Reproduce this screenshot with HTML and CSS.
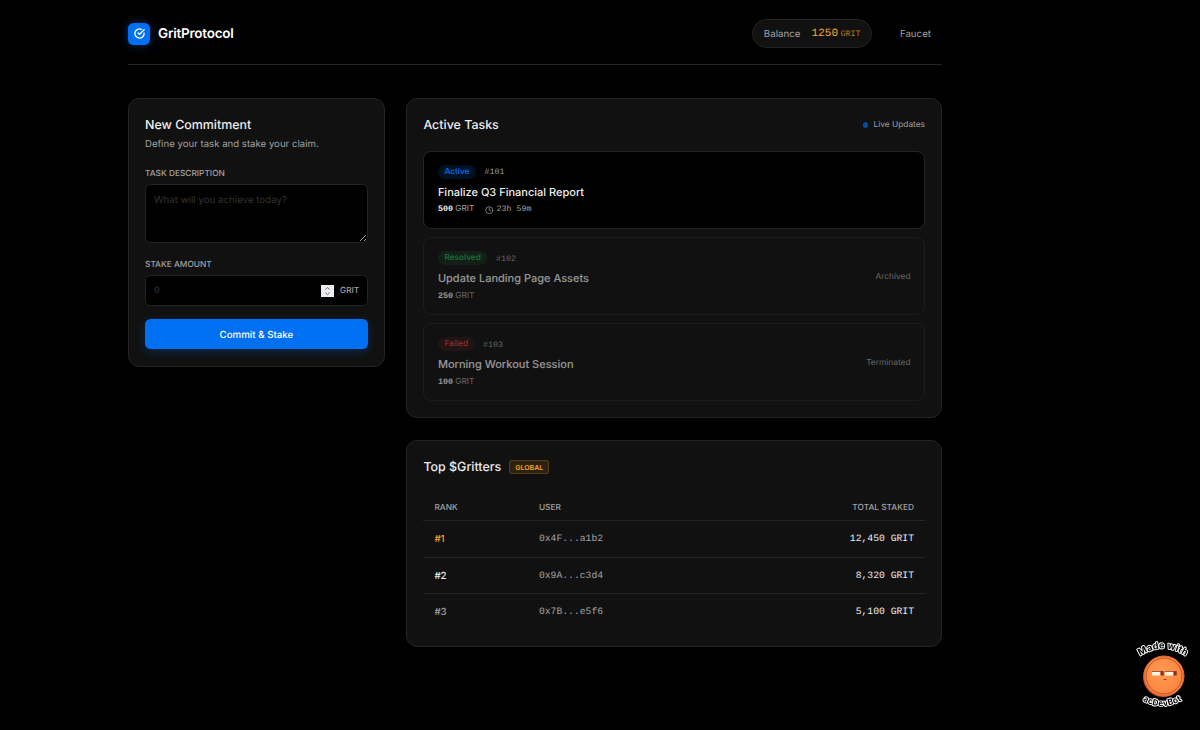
FILE: index.html
```html
<!doctype html>
<html lang="en">
  <head>
    <meta charset="UTF-8" />
    <meta name="viewport" content="width=device-width, initial-scale=1.0" />
    <title>GritProtocol</title>
    <link rel="stylesheet" href="styles.css">
  </head>
  <body>
    <div class="container">
      <header class="header">
        <div class="brand">
          <div class="logo">
            <svg viewBox="0 0 24 24" fill="none" stroke="currentColor" stroke-width="3" stroke-linecap="round" stroke-linejoin="round">
              <path d="M22 11.08V12a10 10 0 1 1-5.93-9.14" />
              <polyline points="22 4 12 14.01 9 11.01" />
            </svg>
          </div>
          <span class="brand-name">GritProtocol</span>
        </div>
        <nav class="nav">
          <div class="balance">
            <span>Balance</span>
            <span class="balance-value">1250<small>GRIT</small></span>
          </div>
          <a class="faucet" href="#">Faucet</a>
        </nav>
      </header>

      <main class="layout">
        <section class="card commit">
          <h2>New Commitment</h2>
          <p class="subtitle">Define your task and stake your claim.</p>

          <label class="label" for="task">TASK DESCRIPTION</label>
          <textarea id="task" class="field task-input" placeholder="What will you achieve today?"></textarea>

          <label class="label" for="stake">STAKE AMOUNT</label>
          <div class="field stake-field">
            <input id="stake" class="stake-input" type="text" inputmode="numeric" placeholder="0" />
            <span class="spinner">
              <svg viewBox="0 0 13 12" fill="none" stroke="currentColor">
                <path d="M4.3 4.6 6.5 2.5l2.2 2.1M4.3 7.6l2.2 2.1 2.2-2.1" />
              </svg>
            </span>
            <span class="unit">GRIT</span>
          </div>

          <button class="submit" type="button">Commit &amp; Stake</button>
        </section>

        <div class="column">
          <section class="card tasks">
            <div class="card-head">
              <h2>Active Tasks</h2>
              <span class="live"><i class="dot"></i><span>Live Updates</span></span>
            </div>

            <div class="task-list">
              <article class="task task-active">
                <div>
                  <div class="task-top">
                    <span class="badge badge-active">Active</span>
                    <span class="task-id">#101</span>
                  </div>
                  <h3>Finalize Q3 Financial Report</h3>
                  <div class="task-meta">
                    <span><b>500</b> GRIT</span>
                    <span class="timer">
                      <svg viewBox="0 0 24 24" fill="none" stroke="currentColor" stroke-width="2" stroke-linecap="round" stroke-linejoin="round">
                        <circle cx="12" cy="12" r="10" />
                        <polyline points="12 6 12 12 16 14" />
                      </svg>
                      23h 59m
                    </span>
                  </div>
                </div>
              </article>

              <article class="task task-done">
                <div>
                  <div class="task-top">
                    <span class="badge badge-resolved">Resolved</span>
                    <span class="task-id">#102</span>
                  </div>
                  <h3>Update Landing Page Assets</h3>
                  <div class="task-meta"><span><b>250</b> GRIT</span></div>
                </div>
                <span class="state">Archived</span>
              </article>

              <article class="task task-done">
                <div>
                  <div class="task-top">
                    <span class="badge badge-failed">Failed</span>
                    <span class="task-id">#103</span>
                  </div>
                  <h3>Morning Workout Session</h3>
                  <div class="task-meta"><span><b>100</b> GRIT</span></div>
                </div>
                <span class="state">Terminated</span>
              </article>
            </div>
          </section>

          <section class="card board">
            <div class="board-head">
              <h2>Top $Gritters</h2>
              <span class="tag">GLOBAL</span>
            </div>
            <table class="table">
              <thead>
                <tr><th class="rank">RANK</th><th>USER</th><th class="total">TOTAL STAKED</th></tr>
              </thead>
              <tbody>
                <tr><td class="rank first">#1</td><td class="user">0x4F...a1b2</td><td class="total">12,450 GRIT</td></tr>
                <tr><td class="rank">#2</td><td class="user">0x9A...c3d4</td><td class="total">8,320 GRIT</td></tr>
                <tr><td class="rank third">#3</td><td class="user">0x7B...e5f6</td><td class="total">5,100 GRIT</td></tr>
              </tbody>
            </table>
          </section>
        </div>
      </main>
    </div>

    <!-- Floating maker badge -->
    <a class="maker" href="#">
      <svg viewBox="0 0 75 85">
        <defs>
          <radialGradient id="coin" cx="45%" cy="42%" r="60%">
            <stop offset="0" stop-color="#ff9c50" />
            <stop offset="1" stop-color="#fb8140" />
          </radialGradient>
          <path id="arc-top" d="M13 27.5Q38 9.5 63 27.5" />
          <path id="arc-bottom" d="M15.5 69.500Q37 83 59 69" />
        </defs>
        <circle cx="38" cy="47" r="20" fill="#b94820" />
        <circle cx="39" cy="46" r="20" fill="url(#coin)" stroke="#e76830" stroke-width="1" />
        <circle cx="39" cy="46" r="18" fill="none" stroke="#a84722" stroke-width="0.8" />
        <path d="M27 41.5h8.5v4H27zM40 41.5h8.5v4H40z" fill="#fff3e8" />
        <path d="M35.5 41.5h3.2v4h-3.2zM48.5 41.5h3.2v4h-3.2z" fill="#873019" />
        <path d="M27 41.5h11.7M40 41.5h11.7" stroke="#73301a" stroke-width="0.7" />
        <path d="M38.5 49.5h3" stroke="#73301a" stroke-width="0.8" />
        <text class="maker-text"><textPath href="#arc-top" startOffset="50%" text-anchor="middle">Made with</textPath></text>
        <text class="maker-text maker-name"><textPath href="#arc-bottom" startOffset="50%" text-anchor="middle">acDevBot</textPath></text>
      </svg>
    </a>
  </body>
</html>
```
FILE: styles.css
```css
:root {
  --bg: #000;
  --card: #111;
  --line: #242424;
  --text: #ededed;
  --muted: #a1a1a1;
  --blue: #0070f3;
  --gold: #f5a623;
  --mono: "Liberation Mono", monospace;
}

* {
  box-sizing: border-box;
}

body {
  margin: 0;
  height: 100vh;
  overflow: hidden;
  background: var(--bg);
  color: var(--text);
  font-family: Inter, sans-serif;
  font-size: 9.72px;
  line-height: 15px;
  text-rendering: geometricPrecision;
}

h2,
h3,
p {
  margin: 0;
}

h2 {
  font-size: 12.45px;
  font-weight: 500;
  line-height: 21px;
}

.container {
  width: 814px;
  margin-left: 128px;
}

/* Header */
.header {
  display: flex;
  align-items: center;
  justify-content: space-between;
  height: 65px;
  padding-top: 3px;
  border-bottom: 1px solid var(--line);
}

.brand {
  display: flex;
  align-items: center;
  gap: 8px;
}

.logo {
  display: grid;
  place-items: center;
  width: 22px;
  height: 22px;
  border-radius: 5.5px;
  background: var(--blue);
  box-shadow: 0 0 10px rgba(0, 112, 243, 0.4);
}

.logo svg {
  width: 11px;
  height: 11px;
  color: #fff;
}

.brand-name {
  padding-top: 2px;
  color: #fff;
  font-size: 13.5px;
  font-weight: 600;
  letter-spacing: -0.017em;
}

.nav {
  display: flex;
  align-items: center;
  gap: 17px;
  color: var(--muted);
}

.balance {
  display: flex;
  align-items: center;
  gap: 11px;
  height: 29px;
  padding: 2px 10.5px 0;
  border: 1px solid var(--line);
  border-radius: 15px;
  background: var(--card);
}

.balance-value {
  color: var(--gold);
  font-family: var(--mono);
  font-size: 11.1px;
}

.balance-value small {
  margin-left: 2.3px;
  font-size: 8.33px;
  opacity: 0.7;
}

.faucet {
  padding: 2px 11px 0;
  color: inherit;
  text-decoration: none;
}

/* Cards */
.layout {
  display: flex;
  align-items: flex-start;
  gap: 21.6px;
  padding-top: 33px;
}

.card {
  padding: 16px;
  border: 1px solid var(--line);
  border-radius: 11px;
  background: var(--card);
}

.commit {
  display: flex;
  flex-direction: column;
  width: 256.8px;
  height: 269px;
}

.column {
  display: flex;
  flex: 1;
  flex-direction: column;
  gap: 22px;
}

.subtitle {
  color: var(--muted);
  font-size: 9.65px;
  line-height: 17px;
}

/* Form */
.label {
  margin: 15px 0 3px;
  color: var(--muted);
  font-size: 8.33px;
  font-weight: 500;
  line-height: 14px;
}

.subtitle + .label {
  margin-top: 14px;
}

.field {
  border: 1px solid var(--line);
  border-radius: 5.5px;
  background: #000;
}

.task-input {
  display: block;
  width: 100%;
  height: 59px;
  padding: 8px;
  color: var(--text);
  font: inherit;
  text-rendering: inherit;
  resize: vertical;
}

.task-input::placeholder,
.stake-input::placeholder {
  color: #333;
}

.stake-field {
  display: flex;
  align-items: center;
  height: 31px;
  padding: 0 7.5px 0 8px;
}

.stake-input {
  flex: 1;
  min-width: 0;
  padding: 0;
  border: 0;
  background: none;
  color: var(--text);
  font-family: var(--mono);
  font-size: 9.72px;
  text-rendering: inherit;
}

.spinner {
  width: 13px;
  height: 12px;
  margin-right: 6px;
  background: #eeeef2;
  color: #71717a;
}

.spinner svg {
  display: block;
}

.unit {
  padding-top: 2px;
  color: var(--muted);
  font-size: 8.33px;
  font-weight: 500;
}

.submit {
  height: 30px;
  margin-top: 13px;
  padding: 2px 0 0;
  border: 0;
  border-radius: 5.5px;
  background: var(--blue);
  box-shadow: 0 3px 10px rgba(0, 112, 243, 0.25);
  color: #fff;
  font: 500 9.72px Inter, sans-serif;
  text-rendering: inherit;
}

/* Task list */
.tasks {
  height: 320px;
}

.card-head {
  display: flex;
  align-items: center;
  justify-content: space-between;
}

.live {
  display: flex;
  align-items: center;
  gap: 5.5px;
  color: var(--muted);
  font-size: 8.33px;
}

.dot {
  width: 5.5px;
  height: 5.5px;
  margin-bottom: 1px;
  border-radius: 50%;
  background: #084a98;
}

.task-list {
  display: flex;
  flex-direction: column;
  gap: 8px;
  margin-top: 14.5px;
}

.task {
  display: flex;
  align-items: center;
  justify-content: space-between;
  height: 78.3px;
  padding: 2px 13.5px 0;
  border: 1px solid var(--line);
  border-radius: 8px;
}

.task-active {
  background: #000;
}

.task-done {
  opacity: 0.6;
}

.task-top {
  display: flex;
  align-items: center;
  gap: 8.5px;
  height: 15px;
}

.badge {
  height: 14px;
  padding: 0 6.5px;
  border-radius: 7px;
  font-size: 8.33px;
  font-weight: 500;
  line-height: 15px;
}

.badge-active {
  background: rgba(0, 112, 243, 0.15);
  color: var(--blue);
}

.badge-resolved {
  background: rgba(34, 197, 94, 0.15);
  color: #22b858;
}

.badge-failed {
  background: rgba(239, 68, 68, 0.12);
  color: #e04040;
}

.task-id {
  padding-top: 2px;
  color: var(--muted);
  font-family: var(--mono);
  font-size: 8.33px;
}

.task h3 {
  margin-top: 4.5px;
  font-size: 11px;
  font-weight: 500;
  line-height: 17px;
}

.task-meta {
  display: flex;
  align-items: center;
  gap: 11px;
  height: 16px;
  padding-top: 2px;
  color: var(--muted);
  font-size: 8.33px;
}

.task-meta b {
  color: var(--text);
  font-family: var(--mono);
}

.timer {
  display: flex;
  align-items: center;
  gap: 2.5px;
  font-family: var(--mono);
}

.timer svg {
  width: 8.5px;
  height: 8.5px;
}

.state {
  padding-top: 1px;
  color: var(--muted);
  font-size: 8.33px;
}

/* Leaderboard */
.board {
  height: 207px;
}

.board-head {
  display: flex;
  align-items: center;
  gap: 8px;
}

.tag {
  height: 14px;
  margin-bottom: 2px;
  padding: 0 5px;
  border: 1px solid rgba(245, 166, 35, 0.2);
  border-radius: 3px;
  background: rgba(245, 166, 35, 0.12);
  color: var(--gold);
  font-size: 6.94px;
  font-weight: 600;
  line-height: 13px;
}

.table {
  width: 100%;
  margin-top: 15px;
  border-collapse: collapse;
  table-layout: fixed;
}

.table th {
  height: 27px;
  padding: 4px 11px 0;
  border-bottom: 1px solid var(--line);
  color: var(--muted);
  font-size: 8.33px;
  font-weight: 500;
  text-align: left;
}

.table td {
  height: 36px;
  padding: 0 11px;
}

.table tbody tr:first-child td {
  height: 37px;
}

.table tbody tr + tr td {
  border-top: 1px solid var(--line);
}

.table .rank {
  width: 104.5px;
  font-weight: 500;
}

.table td.rank {
  padding-top: 2px;
}

.table .first {
  color: var(--gold);
}

.table .third {
  color: var(--muted);
}

.table .user {
  color: var(--muted);
  font-family: var(--mono);
}

.table .total {
  text-align: right;
}

.table td.total {
  font-family: var(--mono);
}

/* Maker badge sits above the page in the corner */
.maker {
  position: fixed;
  right: 0;
  bottom: 15px;
  width: 75px;
  height: 85px;
}

.maker-text {
  fill: #000;
  stroke: #fff;
  stroke-width: 1.8px;
  stroke-linejoin: round;
  paint-order: stroke;
  font: 700 9.4px Inter, sans-serif;
  letter-spacing: 0.1px;
}

.maker-name {
  font-size: 8.6px;
}
```
